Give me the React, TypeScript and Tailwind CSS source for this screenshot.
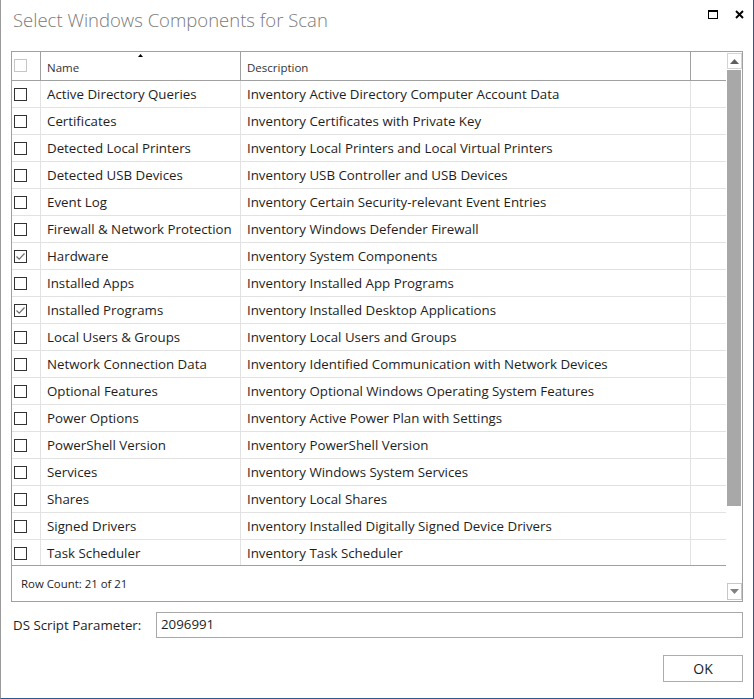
import React from 'react';

type Row = { name: string; desc: string; checked?: boolean };

const rows: Row[] = [
  { name: 'Active Directory Queries', desc: 'Inventory Active Directory Computer Account Data' },
  { name: 'Certificates', desc: 'Inventory Certificates with Private Key' },
  { name: 'Detected Local Printers', desc: 'Inventory Local Printers and Local Virtual Printers' },
  { name: 'Detected USB Devices', desc: 'Inventory USB Controller and USB Devices' },
  { name: 'Event Log', desc: 'Inventory Certain Security-relevant Event Entries' },
  { name: 'Firewall & Network Protection', desc: 'Inventory Windows Defender Firewall' },
  { name: 'Hardware', desc: 'Inventory System Components', checked: true },
  { name: 'Installed Apps', desc: 'Inventory Installed App Programs' },
  { name: 'Installed Programs', desc: 'Inventory Installed Desktop Applications', checked: true },
  { name: 'Local Users & Groups', desc: 'Inventory Local Users and Groups' },
  { name: 'Network Connection Data', desc: 'Inventory Identified Communication with Network Devices' },
  { name: 'Optional Features', desc: 'Inventory Optional Windows Operating System Features' },
  { name: 'Power Options', desc: 'Inventory Active Power Plan with Settings' },
  { name: 'PowerShell Version', desc: 'Inventory PowerShell Version' },
  { name: 'Services', desc: 'Inventory Windows System Services' },
  { name: 'Shares', desc: 'Inventory Local Shares' },
  { name: 'Signed Drivers', desc: 'Inventory Installed Digitally Signed Device Drivers' },
  { name: 'Task Scheduler', desc: 'Inventory Task Scheduler' },
];

function CheckBox({ checked, light }: { checked?: boolean; light?: boolean }) {
  return (
    <div
      className={`w-[13px] h-[13px] border bg-white flex items-center justify-center ${
        light ? 'border-[#c6c6c6]' : 'border-[#333333]'
      }`}
    >
      {checked && (
        <svg width="11" height="11" viewBox="0 0 11 11">
          <path d="M1.5 5.5 L4.2 8.2 L9.5 2.5" fill="none" stroke="#6b6b6b" strokeWidth="1.2" />
        </svg>
      )}
    </div>
  );
}

export default function App() {
  return (
    <div
      className="w-[754px] h-[699px] bg-white border-l border-l-[#9a9a9a] border-r border-r-[#2b5797] border-b border-b-[#2b5797] flex flex-col text-[#1e1e1e]"
      style={{ fontFamily: '"Segoe UI", "Open Sans", "Liberation Sans", sans-serif' }}
    >
      {/* Title bar */}
      <div className="h-[51px] flex items-start shrink-0">
        <div className="pl-[12px] pt-[7px] text-[18.5px] font-light text-[#7a7a7a] leading-[26px] flex-1">
          Select Windows Components for Scan
        </div>
        <div className="flex items-center gap-[17px] pt-[10px] pr-[9px]">
          <div className="w-[10px] h-[9px] border border-black border-t-[2px]" />
          <svg width="9" height="9" viewBox="0 0 9 9">
            <path d="M1 1 L8 8 M8 1 L1 8" stroke="#000" strokeWidth="1.9" />
          </svg>
        </div>
      </div>

      {/* Grid */}
      <div className="ml-[10px] w-[732px] h-[551px] border border-[#a0a0a0] flex shrink-0">
        <div className="flex-1 flex flex-col">
          {/* Header */}
          <div className="h-[29px] flex border-b border-[#a0a0a0] text-[11.5px] text-[#333333] shrink-0">
            <div className="w-[29px] border-r border-[#a0a0a0] pl-[2px] pt-[7px]">
              <CheckBox light />
            </div>
            <div className="w-[200px] border-r border-[#a0a0a0] pl-[6px] relative flex items-end pb-[4px]">
              <span>Name</span>
              <svg className="absolute left-[97px] top-[2px]" width="5" height="3" viewBox="0 0 5 3">
                <path d="M0 3 L2.5 0 L5 3 Z" fill="#000" />
              </svg>
            </div>
            <div className="w-[450px] border-r border-[#a0a0a0] pl-[6px] flex items-end pb-[4px]">
              Description
            </div>
            <div className="flex-1" />
          </div>

          {/* Rows */}
          <div className="h-[484px] overflow-hidden shrink-0">
            {rows.map((r) => (
              <div key={r.name} className="h-[27px] flex border-b border-[#e2e2e2] text-[13.3px]">
                <div className="w-[29px] border-r border-[#e2e2e2] pl-[2px] flex items-center">
                  <CheckBox checked={r.checked} />
                </div>
                <div className="w-[200px] border-r border-[#e2e2e2] pl-[6px] pt-[2px] flex items-center whitespace-nowrap">
                  {r.name}
                </div>
                <div className="w-[450px] border-r border-[#e2e2e2] pl-[6px] pt-[2px] flex items-center whitespace-nowrap">
                  {r.desc}
                </div>
                <div className="flex-1" />
              </div>
            ))}
          </div>

          {/* Footer */}
          <div className="flex-1 border-t border-[#a0a0a0] pl-[9px] flex items-center text-[11.4px] text-[#1e1e1e]">
            Row Count: 21 of 21
          </div>
        </div>

        {/* Scrollbar */}
        <div className="w-[16px] flex flex-col items-center pt-[1px] pb-[1px]">
          <div className="w-[15px] h-[16px] border border-[#d4d4d4] flex items-center justify-center shrink-0">
            <svg width="9" height="5" viewBox="0 0 9 5">
              <path d="M0 5 L4.5 0 L9 5 Z" fill="#606060" />
            </svg>
          </div>
          <div className="w-[14px] h-[436px] bg-[#a8a8a8] mt-[1px] shrink-0" />
          <div className="flex-1" />
          <div className="w-[15px] h-[17px] border border-[#c8c8c8] flex items-center justify-center shrink-0">
            <svg width="9" height="5" viewBox="0 0 9 5">
              <path d="M0 0 L4.5 5 L9 0 Z" fill="#808080" />
            </svg>
          </div>
        </div>
      </div>

      {/* Parameter */}
      <div className="flex items-center mt-[10px] h-[26px] shrink-0">
        <div className="w-[155px] pl-[12px] pt-[1px] text-[13.3px]">DS Script Parameter:</div>
        <div className="w-[587px] h-[26px] border border-[#a8a8a8] pl-[4px] flex items-center text-[13.3px]">
          2096991
        </div>
      </div>

      {/* Buttons */}
      <div className="flex justify-end pr-[10px] mt-[17px] shrink-0">
        <button className="w-[80px] h-[27px] border border-[#adadad] bg-white text-[14px] text-[#1e1e1e] flex items-center justify-center">
          OK
        </button>
      </div>
    </div>
  );
}
